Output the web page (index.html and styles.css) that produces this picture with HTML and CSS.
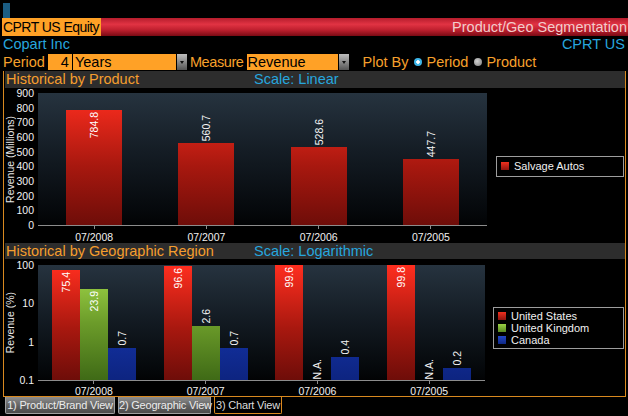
FILE: index.html
```html
<!DOCTYPE html>
<html>
<head>
<meta charset="utf-8">
<title>CPRT US Equity - Product/Geo Segmentation</title>
<link rel="stylesheet" href="styles.css">
</head>
<body>
<div class="screen">
  <div class="topband"><span class="mark"></span></div>
  <div class="titlebar">
    <div class="ticker">CPRT US Equity</div>
    <div class="fn"><span>Product/Geo Segmentation</span></div>
  </div>
  <div class="company"><span>Copart Inc</span><span>CPRT US</span></div>
  <div class="controls">
    <span class="lbl">Period</span>
    <span class="field num">4</span>
    <span class="field years">Years</span>
    <span class="drop"></span>
    <span class="lbl measure-lbl">Measure</span>
    <span class="field measure">Revenue</span>
    <span class="drop"></span>
    <span class="lbl plotby">Plot By</span>
    <span class="radio on"></span><span class="lbl">Period</span>
    <span class="radio off"></span><span class="lbl">Product</span>
  </div>

  <div class="frame">
    <div class="sect"><span class="st">Historical by Product</span><span class="sc">Scale: Linear</span></div>
    <div class="chart c1">
      <div class="ytitle"><span>Revenue (Millions)</span></div>
      <div class="yticks">
        <span>900</span><span>800</span><span>700</span><span>600</span><span>500</span><span>400</span><span>300</span><span>200</span><span>100</span><span>0</span>
      </div>
      <div class="plotwrap">
        <div class="plot">
          <div class="slot"><div class="bar red" style="height:115px"><span class="v">784.8</span></div></div>
          <div class="slot"><span class="v">560.7</span><div class="bar red" style="height:82px"></div></div>
          <div class="slot"><span class="v">528.6</span><div class="bar red" style="height:78px"></div></div>
          <div class="slot"><span class="v">447.7</span><div class="bar red" style="height:66px"></div></div>
        </div>
        <div class="xlabels"><span>07/2008</span><span>07/2007</span><span>07/2006</span><span>07/2005</span></div>
      </div>
      <div class="legendcol">
        <div class="legend">
          <div class="item"><i class="sw red"></i>Salvage Autos</div>
        </div>
      </div>
    </div>

    <div class="sect s2"><span class="st">Historical by Geographic Region</span><span class="sc">Scale: Logarithmic</span></div>
    <div class="chart c2">
      <div class="ytitle"><span>Revenue (%)</span></div>
      <div class="yticks">
        <span>100</span><span>10</span><span>1</span><span>0.1</span>
      </div>
      <div class="plotwrap">
        <div class="plot">
          <div class="slot"><div class="group">
            <div class="col"><div class="bar red" style="height:110px"><span class="v">75.4</span></div></div>
            <div class="col"><div class="bar green" style="height:91px"><span class="v">23.9</span></div></div>
            <div class="col"><span class="v">0.7</span><div class="bar blue" style="height:32px"></div></div>
          </div></div>
          <div class="slot"><div class="group">
            <div class="col"><div class="bar red" style="height:114px"><span class="v">96.6</span></div></div>
            <div class="col"><span class="v">2.6</span><div class="bar green" style="height:54px"></div></div>
            <div class="col"><span class="v">0.7</span><div class="bar blue" style="height:32px"></div></div>
          </div></div>
          <div class="slot"><div class="group">
            <div class="col"><div class="bar red" style="height:115px"><span class="v">99.6</span></div></div>
            <div class="col"><span class="v na">N.A.</span></div>
            <div class="col"><span class="v">0.4</span><div class="bar blue" style="height:23px"></div></div>
          </div></div>
          <div class="slot"><div class="group">
            <div class="col"><div class="bar red" style="height:115px"><span class="v">99.8</span></div></div>
            <div class="col"><span class="v na">N.A.</span></div>
            <div class="col"><span class="v">0.2</span><div class="bar blue" style="height:12px"></div></div>
          </div></div>
        </div>
        <div class="xlabels"><span>07/2008</span><span>07/2007</span><span>07/2006</span><span>07/2005</span></div>
      </div>
      <div class="legendcol">
        <div class="legend">
          <div class="item"><i class="sw red"></i>United States</div>
          <div class="item"><i class="sw green"></i>United Kingdom</div>
          <div class="item"><i class="sw blue"></i>Canada</div>
        </div>
      </div>
    </div>
  </div>

  <div class="tabs">
    <span class="tab t1">1) Product/Brand View</span>
    <span class="tab t2">2) Geographic View</span>
    <span class="tab t3 active">3) Chart View</span>
  </div>
</div>
</body>
</html>
```
FILE: styles.css
```css
* { box-sizing: border-box; margin: 0; padding: 0; }
html, body { background: #000; }
body {
  width: 628px;
  height: 416px;
  overflow: hidden;
  font-family: "Liberation Sans", Arial, sans-serif;
  color: #fff;
}

.screen { width: 628px; height: 416px; }

/* top band */
.topband { height: 18px; padding: 3px 0 0 3px; }
.mark { display: block; width: 7px; height: 15px; background: #1b5d83; }

/* title bar */
.titlebar {
  display: flex;
  height: 18px;
  margin-left: 2px;
  background: linear-gradient(#b51d2c, #e13343 35%, #c0202f 65%, #7a0a14);
  font-size: 14.5px;
  line-height: 18px;
}
.ticker {
  width: 99px;
  background: #ffa126;
  color: #000;
  padding-left: 1px;
  font-size: 14px;
  letter-spacing: -0.55px;
  white-space: nowrap;
}
.fn {
  flex: 1;
  text-align: right;
  white-space: nowrap;
  color: #f2cccc;
  padding-right: 1px;
}

/* company row */
.company {
  display: flex;
  justify-content: space-between;
  height: 17px;
  padding: 0 3px 0 3px;
  color: #27a6de;
  font-size: 14.5px;
  line-height: 17px;
}

/* controls */
.controls {
  display: flex;
  align-items: center;
  height: 18px;
  padding-left: 3px;
  font-size: 14.5px;
  color: #f7a02c;
}
.lbl { line-height: 16px; white-space: nowrap; }
.field {
  height: 16px;
  line-height: 16px;
  background: #ffa126;
  color: #000;
  white-space: nowrap;
}
.num { width: 24px; margin-left: 3px; text-align: right; padding-right: 3px; }
.years { width: 103px; margin-left: 1px; padding-left: 2px; }
.measure { width: 91px; margin-left: 3px; padding-left: 1px; }
.measure-lbl { margin-left: 3px; letter-spacing: -0.4px; }
.drop {
  width: 10px;
  height: 16px;
  margin-left: 1px;
  background: linear-gradient(#bdbdbd, #8a8a8a 50%, #555);
  display: flex;
  align-items: center;
  justify-content: center;
}
.drop::after {
  content: "";
  border-left: 2px solid transparent;
  border-right: 2px solid transparent;
  border-top: 3px solid #111;
}
.plotby { margin-left: 14px; }
.radio {
  width: 8px;
  height: 8px;
  border-radius: 50%;
  margin: 0 4px 0 6px;
}
.radio.on { background: radial-gradient(circle, #fff 0 1.5px, #3cb6ea 2px); }
.radio.off { background: radial-gradient(circle at 40% 40%, #d0d0d0, #7a7a7a); }

/* frame */
.frame {
  width: 623px;
  margin-left: 3px;
  border: 1px solid #d9891f;
  border-top: none;
}
.sect {
  display: grid;
  grid-template-columns: 248px 1fr;
  height: 17px;
  margin: 0 0 0 1px;
  padding-left: 1px;
  background: #2d2d2d;
  font-size: 14.5px;
  line-height: 17px;
  white-space: nowrap;
}
.sect.s2 { height: 16px; line-height: 16px; }
.st { color: #f59e2e; }
.sc { color: #27a6de; }

/* charts */
.chart { display: grid; }
.c1 { grid-template-columns: 12px 22px 449px 1fr; height: 155px; --ph: 132px; }
.c2 { grid-template-columns: 12px 22px 447px 1fr; height: 137px; --ph: 115px; }

.ytitle {
  display: flex;
  align-items: center;
  justify-content: center;
  font-size: 10.5px;
  color: #e6e6e6;
}
.c1 .ytitle { height: 137px; padding-top: 5px; }
.c2 .ytitle { height: 121px; padding-top: 6px; }
.ytitle span {
  writing-mode: vertical-rl;
  transform: rotate(180deg);
  white-space: nowrap;
}

.yticks {
  display: flex;
  flex-direction: column;
  justify-content: space-between;
  align-items: flex-end;
  padding-right: 4px;
  font-size: 10.5px;
  line-height: 12px;
  color: #f2f2f2;
}
.c1 .yticks { margin-top: -1px; height: 144px; }
.c2 .yticks { margin-top: 0; height: 127px; }

.plot {
  display: flex;
  height: calc(var(--ph) + 1px);
  border-bottom: 1px solid #8c8c8c;
  background: linear-gradient(#26333f, #141c24 45%, #05080b 90%, #020304);
}
.c1 .plot { margin-top: 5px; }
.c2 .plot { margin-top: 6px; }

.slot {
  flex: 1;
  display: flex;
  flex-direction: column;
  justify-content: flex-end;
  align-items: center;
}
.group { display: flex; align-items: flex-end; height: 100%; }
.col {
  width: 28px;
  height: 100%;
  display: flex;
  flex-direction: column;
  justify-content: flex-end;
  align-items: center;
}
.bar {
  width: 56px;
  display: flex;
  flex-direction: column;
  align-items: center;
  padding-top: 2px;
  background-repeat: no-repeat;
  background-position: left bottom;
  background-size: 100% var(--ph);
}
.col .bar { width: 28px; }
.bar.red { background-image: linear-gradient(to top, #6e0d09, #a8180f 45%, #ff2e1f); }
.bar.green { background-image: linear-gradient(to top, #3f6a16, #6c9c2a 50%, #a6dc4c); }
.bar.blue { background-image: linear-gradient(to top, #0d2480, #1433a6 50%, #2a52d8); }

.v {
  writing-mode: vertical-rl;
  transform: rotate(180deg);
  font-size: 10.5px;
  line-height: 12px;
  color: #f4f4f4;
  white-space: nowrap;
  margin-bottom: 2px;
}
.bar .v { margin-bottom: 0; color: #fff; }
.v.na { margin-bottom: 1px; }

.xlabels {
  display: flex;
  font-size: 10.5px;
  color: #f0f0f0;
}
.xlabels span {
  flex: 1;
  display: flex;
  flex-direction: column;
  align-items: center;
}
.xlabels span::before {
  content: "";
  width: 1px;
  height: 3px;
  background: #8c8c8c;
}
.c1 .xlabels span { line-height: 13px; gap: 2px; }
.c2 .xlabels span { line-height: 12px; gap: 1px; }

.legendcol {
  display: flex;
  align-items: center;
  padding-right: 1px;
}
.c1 .legendcol { padding-left: 9px; }
.c2 .legendcol { padding-left: 8px; }
.legend {
  flex: 1;
  border: 1px solid #9d9d9d;
  padding: 3px 4px;
  font-size: 11px;
  line-height: 13px;
  color: #f0f0f0;
}
.c2 .legend { padding: 2px 4px 2px 4px; line-height: 12px; }
.item { display: flex; align-items: center; white-space: nowrap; }
.sw { display: block; width: 8px; height: 8px; margin-right: 5px; }
.sw.red { background: linear-gradient(#f0301f, #8e140e); }
.sw.green { background: linear-gradient(#9ad044, #5a8a22); }
.sw.blue { background: linear-gradient(#2448c8, #0e2884); }

/* tabs */
.tabs {
  display: flex;
  padding-left: 5px;
  height: 17px;
}
.tab {
  height: 17px;
  font-size: 11px;
  letter-spacing: -0.2px;
  line-height: 16px;
  color: #ececec;
  text-align: center;
  white-space: nowrap;
  border-radius: 0 0 2px 2px;
}
.t1, .t2 {
  background: linear-gradient(#8e8e8e, #5e5e5e 60%, #4a4a4a);
  border: 1px solid #a0a0a0;
  border-top: none;
}
.t1 { width: 110px; }
.t2 { width: 93px; margin-left: 3px; }
.t3 { width: 68px; margin-left: 3px; background: #000; border: 1px solid #d9891f; border-top: none; color: #dcdcdc; }
```
